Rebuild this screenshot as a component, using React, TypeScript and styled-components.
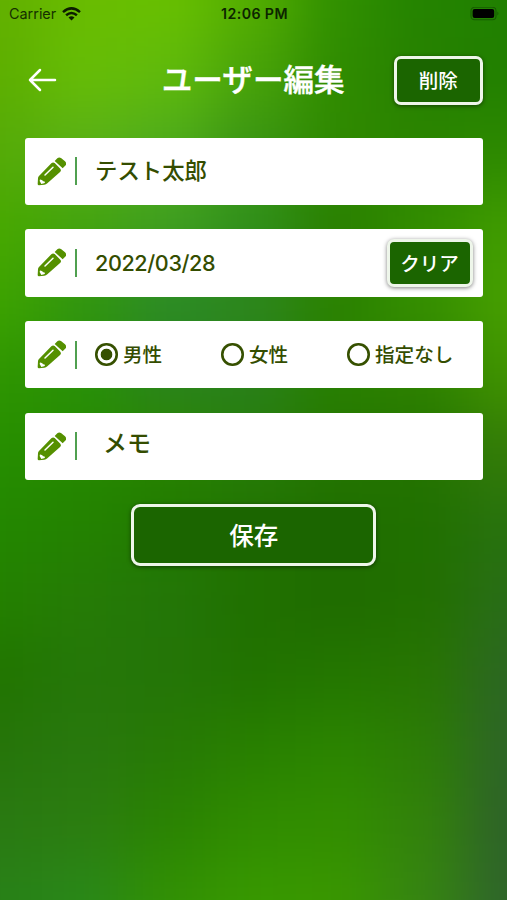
import React, { useState } from "react";
import styled, { createGlobalStyle } from "styled-components";

const GlobalStyle = createGlobalStyle`
  * { box-sizing: border-box; }
  body { margin: 0; }
  button, input { font: inherit; }
`;

const Screen = styled.div`
  display: grid;
  width: 507px;
  height: 900px;
  overflow: hidden;
  font-family: Inter, "Noto Sans CJK JP", sans-serif;
`;

const WallpaperArt = styled.svg`
  grid-area: 1 / 1;
  width: 507px;
  height: 900px;
`;

const Content = styled.div`
  grid-area: 1 / 1;
  z-index: 1;
  width: 507px;
  height: 900px;
`;

const StatusBar = styled.header`
  display: grid;
  grid-template-columns: 1fr auto 1fr;
  align-items: center;
  height: 27px;
  padding: 0 7px 0 9px;
  color: #153000;
`;

const CarrierGroup = styled.div`
  display: flex;
  align-items: center;
  gap: 6px;
  font-size: 14.4px;
`;

const Clock = styled.time`
  font-weight: 600;
  font-size: 14.2px;
  letter-spacing: 0.4px;
  color: #0c2400;
`;

const BatteryIcon = styled.svg`
  justify-self: end;
`;

const TitleBar = styled.div`
  display: grid;
  grid-template-columns: 1fr auto 1fr;
  align-items: center;
  height: 106px;
  padding: 0 24.5px 0 26.5px;
`;

const BackButton = styled.button`
  display: flex;
  width: 30px;
  padding: 0;
  border: 0;
  background: none;
`;

const Title = styled.h1`
  margin: 0 2.5px 0 0;
  font-size: 30.6px;
  line-height: 40px;
  font-weight: 500;
  color: #fff;
  -webkit-text-stroke: 0.4px #fff;
`;

const ActionButton = styled.button<{ $width: number; $height: number; $size: number; $radius: number }>`
  display: flex;
  align-items: center;
  justify-content: center;
  width: ${(p) => p.$width}px;
  height: ${(p) => p.$height}px;
  padding: 0 0 1px;
  border: 3px solid #eef6ea;
  border-radius: ${(p) => p.$radius}px;
  background: #1b6500;
  box-shadow: 0 1px 4px rgba(0, 0, 0, 0.5);
  color: #fff;
  font-size: ${(p) => p.$size}px;
  font-weight: 500;
`;

const DeleteSlot = styled.div`
  justify-self: end;
`;

const Form = styled.form`
  display: flex;
  flex-direction: column;
  align-items: center;
  gap: 24.4px;
  padding: 4.8px 24.5px 0 25px;
`;

const Field = styled.div`
  display: flex;
  align-items: center;
  width: 100%;
  height: 67.2px;
  padding: 0 10px 0 12px;
  border-radius: 3px;
  background: #fff;
  color: #344d00;
`;

const Divider = styled.span`
  flex: none;
  width: 1.5px;
  height: 28px;
  margin: 0 18.5px 0 9px;
  background: #50a050;
`;

const Value = styled.span<{ $inset?: number; $lift?: number; $size?: number; $weight?: number; $tracking?: number }>`
  flex: 1;
  padding-left: ${(p) => p.$inset ?? 0}px;
  padding-bottom: ${(p) => p.$lift ?? 0}px;
  font-size: ${(p) => p.$size ?? 22.4}px;
  line-height: 30px;
  font-weight: ${(p) => p.$weight ?? 500};
  letter-spacing: ${(p) => p.$tracking ?? 0}px;
`;

const Choices = styled.div`
  display: grid;
  flex: 1;
  grid-template-columns: 126px 126px 1fr;
`;

const Choice = styled.label`
  display: flex;
  align-items: center;
  gap: 6px;
  font-size: 19.6px;
  line-height: 26px;
  font-weight: 500;
  white-space: nowrap;
`;

const Radio = styled.input`
  appearance: none;
  width: 22.5px;
  height: 22.5px;
  margin: 0 -0.5px 0 0;
  border-radius: 50%;
  box-shadow: inset 0 0 0 2.6px #365000;
  &:checked {
    background: radial-gradient(circle, #365000 0 5.4px, transparent 6.2px);
  }
`;

const wallpaperColors = [
  ["#62b000", "#69bc00", "#68c000", "#53ad00", "#309000", "#248300", "#208000"],
  ["#5daf00", "#66bd06", "#60ba0c", "#48a309", "#2f8b00", "#278100", "#218000"],
  ["#55ab08", "#59b018", "#4dab1d", "#399414", "#2f8900", "#2b8400", "#2c8900"],
  ["#47a800", "#44a40f", "#409f20", "#30901b", "#297f00", "#328d00", "#409c00"],
  ["#3da300", "#319510", "#2b8b26", "#2c861c", "#2b8200", "#358f00", "#469f00"],
  ["#2e9500", "#299109", "#2b841e", "#29801b", "#288000", "#2e8200", "#409300"],
  ["#268e00", "#268a00", "#288400", "#277d0a", "#257600", "#247400", "#347c08"],
  ["#238700", "#238200", "#217a00", "#217300", "#1f6e00", "#207000", "#28720e"],
  ["#238000", "#257b06", "#237608", "#207000", "#1f6b00", "#217000", "#296d17"],
  ["#217500", "#257709", "#247507", "#217300", "#237600", "#277502", "#2c6722"],
  ["#26750a", "#28780e", "#277a05", "#288000", "#2b8500", "#2c7d06", "#2d6526"],
  ["#2a7a12", "#2b7d10", "#2a8302", "#308c00", "#328e00", "#32820b", "#2e6328"],
  ["#288118", "#298819", "#329104", "#389900", "#399700", "#368512", "#2e652a"],
];

const genders = ["男性", "女性", "指定なし"];

function Wallpaper() {
  const cells = [];
  for (let row = -1; row <= wallpaperColors.length; row++) {
    for (let col = -1; col <= 7; col++) {
      const r = Math.min(Math.max(row, 0), wallpaperColors.length - 1);
      const c = Math.min(Math.max(col, 0), 6);
      cells.push(
        <rect key={`${row}:${col}`} x={col * 84.5 - 42.5} y={row * 75 - 37.5} width="85.5" height="76" fill={wallpaperColors[r][c]} />
      );
    }
  }
  return (
    <WallpaperArt viewBox="0 0 507 900" aria-hidden="true">
      <defs>
        <filter id="soften" filterUnits="userSpaceOnUse" x="-130" y="-115" width="770" height="1130" colorInterpolationFilters="sRGB">
          <feGaussianBlur stdDeviation="29" />
        </filter>
      </defs>
      <g filter="url(#soften)">{cells}</g>
    </WallpaperArt>
  );
}

function Pencil() {
  return (
    <svg width="29" height="29" viewBox="66 80 87 87" aria-hidden="true">
      <path d="M68 161 L69 144 Q69 140 72 137 L109 99 Q114 94 119 98 L136 115 Q140 120 136 124 L97 159 Q93 163 88 163 L72 165 Q68 165 68 161Z" fill="#559000" />
      <path d="M119 92 L127 84 Q132 79 138 83 L150 93 Q156 99 152 105 L143 114Z" fill="#559000" />
      <path d="M90 134 L114 111" stroke="#fff" strokeWidth="4.5" strokeLinecap="round" />
      <path d="M74 152 Q74 147 78 148 Q83 149 84 153 Q89 152 90 156 Q90 159 79 161Z" fill="#fff" />
    </svg>
  );
}

function FieldRow({ children }: { children: React.ReactNode }) {
  return (
    <Field>
      <Pencil />
      <Divider />
      {children}
    </Field>
  );
}

export default function App() {
  const [gender, setGender] = useState(genders[0]);
  return (
    <Screen>
      <GlobalStyle />
      <Wallpaper />
      <Content>
        <StatusBar>
          <CarrierGroup>
            Carrier
            <svg width="19" height="14" viewBox="0 0 19 14" fill="none" stroke="#0c1d00" strokeWidth="2.5" aria-hidden="true">
              <path d="M1 5.1 Q9.5 -2.4 18 5.1" />
              <path d="M4.1 8.3 Q9.5 3.6 14.9 8.3" />
              <path d="M6.5 10.5 Q9.5 8 12.5 10.5 L9.5 13.5Z" fill="#0c1d00" stroke="none" />
            </svg>
          </CarrierGroup>
          <Clock>12:06 PM</Clock>
          <BatteryIcon width="30" height="14" viewBox="0 0 30 14" aria-hidden="true">
            <rect x="1" y="0.3" width="25" height="12.4" rx="3.5" fill="none" stroke="#175b00" strokeWidth="1.1" />
            <rect x="2.6" y="2" width="21.6" height="9" rx="2" fill="#000" />
            <path d="M27.4 4.5 Q29.5 6.5 27.4 8.5Z" fill="#175b00" />
          </BatteryIcon>
        </StatusBar>
        <TitleBar>
          <BackButton aria-label="戻る">
            <svg width="30" height="24" viewBox="0 0 30 24" fill="none" stroke="#fff" strokeWidth="2.5" strokeLinecap="round" strokeLinejoin="round" aria-hidden="true">
              <path d="M13 2 L3 12 L13 22 M3 12 H28" />
            </svg>
          </BackButton>
          <Title>ユーザー編集</Title>
          <DeleteSlot>
            <ActionButton $width={88.5} $height={49} $size={19.5} $radius={7}>削除</ActionButton>
          </DeleteSlot>
        </TitleBar>
        <Form onSubmit={(e) => e.preventDefault()}>
          <FieldRow>
            <Value>テスト太郎</Value>
          </FieldRow>
          <FieldRow>
            <Value $size={21.6} $weight={450} $tracking={-0.4}>2022/03/28</Value>
            <ActionButton type="button" $width={86} $height={48} $size={19.5} $radius={7}>クリア</ActionButton>
          </FieldRow>
          <FieldRow>
            <Choices>
              {genders.map((name) => (
                <Choice key={name}>
                  <Radio type="radio" name="gender" checked={gender === name} onChange={() => setGender(name)} />
                  {name}
                </Choice>
              ))}
            </Choices>
          </FieldRow>
          <FieldRow>
            <Value $inset={8} $lift={5} $size={24}>メモ</Value>
          </FieldRow>
          <ActionButton $width={245} $height={61.5} $size={24.5} $radius={9}>保存</ActionButton>
        </Form>
      </Content>
    </Screen>
  );
}
